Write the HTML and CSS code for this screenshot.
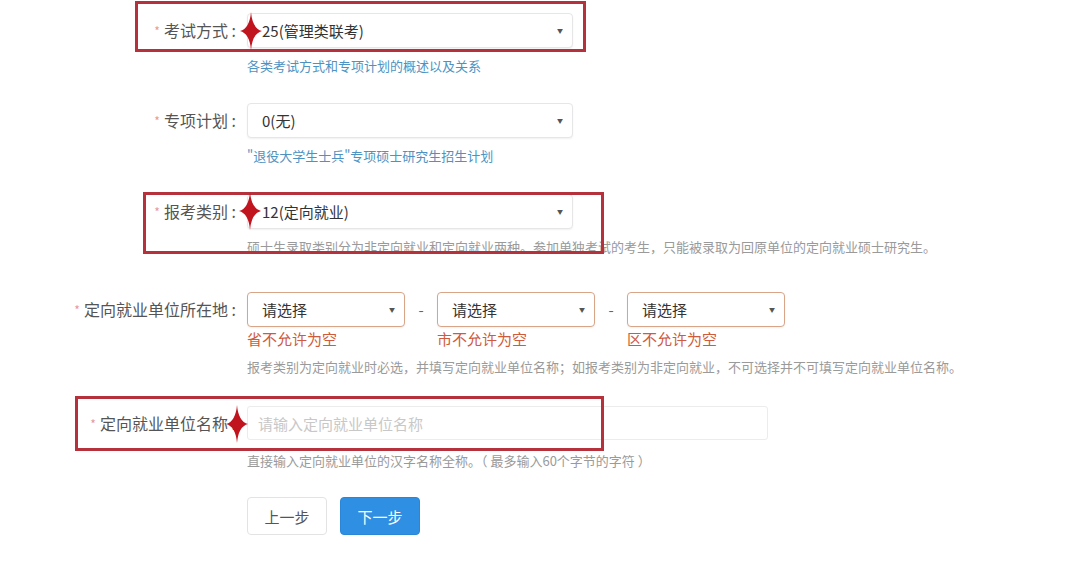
FILE: index.html
```html
<!DOCTYPE html>
<html lang="zh">
<head>
<meta charset="utf-8">
<link rel="stylesheet" href="styles.css">
</head>
<body>
<form class="form">
  <div class="row r1">
    <div class="label"><span class="req">*</span>考试方式 :</div>
    <div class="field">
      <div class="select wide"><span>25(管理类联考)</span><i class="arrow">▼</i></div>
      <div class="help blue">各类考试方式和专项计划的概述以及关系</div>
    </div>
    <div class="mark mark1"></div>
    <svg class="star star1" viewBox="-12 -20 24 40"><path d="M0,-19 Q1.4,-2.5 11,0 Q1.4,2.5 0,19 Q-1.4,2.5 -11,0 Q-1.4,-2.5 0,-19Z"/></svg>
  </div>

  <div class="row r2">
    <div class="label"><span class="req">*</span>专项计划 :</div>
    <div class="field">
      <div class="select wide"><span>0(无)</span><i class="arrow">▼</i></div>
      <div class="help blue">"退役大学生士兵"专项硕士研究生招生计划</div>
    </div>
  </div>

  <div class="row r3">
    <div class="label"><span class="req">*</span>报考类别 :</div>
    <div class="field">
      <div class="select wide"><span>12(定向就业)</span><i class="arrow">▼</i></div>
      <div class="help">硕士生录取类别分为非定向就业和定向就业两种。参加单独考试的考生，只能被录取为回原单位的定向就业硕士研究生。</div>
    </div>
    <div class="mark mark3"></div>
    <svg class="star star3" viewBox="-12 -20 24 40"><path d="M0,-19 Q1.4,-2.5 11,0 Q1.4,2.5 0,19 Q-1.4,2.5 -11,0 Q-1.4,-2.5 0,-19Z"/></svg>
  </div>

  <div class="row r4">
    <div class="label"><span class="req">*</span>定向就业单位所在地 :</div>
    <div class="field">
      <div class="triple">
        <div class="cell">
          <div class="select small err"><span>请选择</span><i class="arrow">▼</i></div>
          <div class="error">省不允许为空</div>
        </div>
        <div class="dash">-</div>
        <div class="cell">
          <div class="select small err"><span>请选择</span><i class="arrow">▼</i></div>
          <div class="error">市不允许为空</div>
        </div>
        <div class="dash">-</div>
        <div class="cell">
          <div class="select small err"><span>请选择</span><i class="arrow">▼</i></div>
          <div class="error">区不允许为空</div>
        </div>
      </div>
      <div class="help">报考类别为定向就业时必选，并填写定向就业单位名称；如报考类别为非定向就业，不可选择并不可填写定向就业单位名称。</div>
    </div>
  </div>

  <div class="row r5">
    <div class="label"><span class="req">*</span>定向就业单位名称 :</div>
    <div class="field">
      <div class="input"><span class="ph">请输入定向就业单位名称</span></div>
      <div class="help">直接输入定向就业单位的汉字名称全称。（ 最多输入60个字节的字符 ）</div>
    </div>
    <div class="mark mark5"></div>
    <svg class="star star5" viewBox="-12 -20 24 40"><path d="M0,-19 Q1.4,-2.5 11,0 Q1.4,2.5 0,19 Q-1.4,2.5 -11,0 Q-1.4,-2.5 0,-19Z"/></svg>
  </div>

  <div class="buttons">
    <button type="button" class="btn prev">上一步</button>
    <button type="button" class="btn next">下一步</button>
  </div>
</form>
</body>
</html>
```

FILE: styles.css
```css
html, body {
  margin: 0;
  padding: 0;
  background: #ffffff;
}
body {
  font-family: "Noto Sans CJK SC", "Liberation Sans", sans-serif;
  color: #555;
  width: 1080px;
  height: 567px;
  overflow: hidden;
}
.form {
  padding-top: 13px;
}
.row {
  display: flex;
  position: relative;
}
.label {
  width: 243px;
  flex: none;
  text-align: right;
  font-size: 16px;
  line-height: 35px;
  color: #555;
  padding-right: 7px;
  box-sizing: border-box;
  white-space: pre;
}
.req {
  color: #e79a9a;
  font-size: 12px;
  margin-right: 4px;
  vertical-align: 1px;
}
.field {
  display: flex;
  flex-direction: column;
  margin-left: 4px;
}
.select {
  box-sizing: border-box;
  height: 35px;
  border: 1px solid #e6e6e6;
  border-radius: 4px;
  box-shadow: 0 1px 2px rgba(0,0,0,0.06);
  display: flex;
  align-items: center;
  justify-content: space-between;
  padding: 0 9px 0 14px;
  font-size: 15px;
  color: #333;
  background: #fff;
}
.select.wide {
  width: 326px;
}
.select.small {
  width: 158px;
}
.select.err {
  border-color: #d9a588;
}
.arrow {
  font-style: normal;
  font-size: 6px;
  color: #555;
}
.help {
  margin-top: 9px;
  font-size: 13px;
  line-height: 18px;
  color: #9a9a9a;
  white-space: nowrap;
}
.help.blue {
  color: #4d93c2;
}
.r1 { margin-bottom: 28px; }
.r2 { margin-bottom: 29px; }
.r3 { margin-bottom: 36px; }
.r4 { margin-bottom: 30px; }
.r5 { margin-bottom: 27px; }

.triple {
  display: flex;
  align-items: flex-start;
}
.cell {
  display: flex;
  flex-direction: column;
}
.dash {
  width: 32px;
  text-align: center;
  line-height: 35px;
  font-size: 15px;
  color: #666;
}
.error {
  margin-top: 2px;
  font-size: 15px;
  line-height: 20px;
  color: #cf5a3c;
}
.input {
  box-sizing: border-box;
  width: 521px;
  height: 34px;
  border: 1px solid #ececec;
  border-radius: 3px;
  display: flex;
  align-items: center;
  padding-left: 10px;
  font-size: 15px;
}
.ph {
  color: #c8c8c8;
}
.r5 .help {
  margin-top: 12px;
}
.buttons {
  display: flex;
  gap: 13px;
  padding-left: 247px;
}
.btn {
  width: 80px;
  height: 38px;
  border-radius: 4px;
  font-family: "Noto Sans CJK SC", "Liberation Sans", sans-serif;
  font-size: 15px;
  cursor: pointer;
}
.btn.prev {
  background: #fff;
  border: 1px solid #e3e3e3;
  color: #555;
}
.btn.next {
  background: #2f8fe3;
  border: 1px solid #2a86d6;
  color: #fff;
}

/* annotation overlays */
.mark {
  position: absolute;
  border: 3px solid #b5323d;
  box-sizing: border-box;
  pointer-events: none;
}
.mark1 { left: 135px; top: -12px; width: 451px; height: 51px; }
.mark3 { left: 143px; top: -2px; width: 461px; height: 62px; }
.mark5 { left: 75px; top: -10px; width: 529px; height: 55px; }
.star {
  position: absolute;
  width: 24px;
  height: 40px;
  fill: #c0141f;
}
.star1 { left: 239px; top: -2px; }
.star3 { left: 238px; top: -3px; }
.star5 { left: 225px; top: -2px; }
```
